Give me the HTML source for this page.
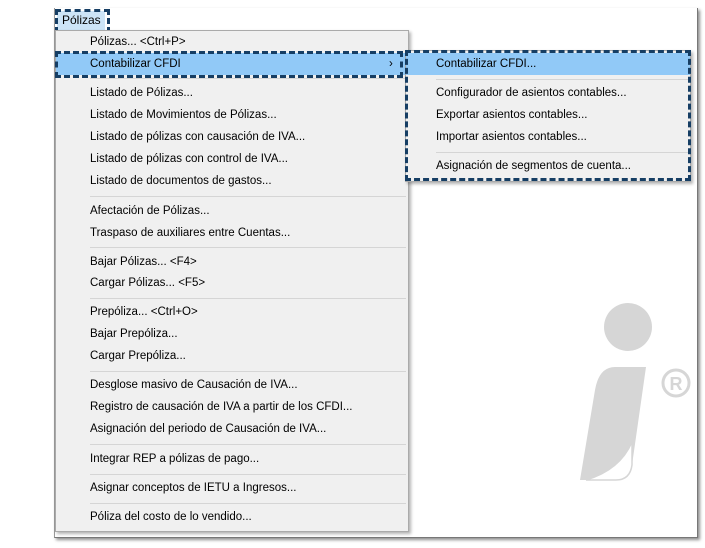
<!DOCTYPE html><html><head><style>
body{margin:0;width:705px;height:548px;background:#fff;position:relative;overflow:hidden;font-family:"Liberation Sans",sans-serif;font-size:11.5px;color:#000}
.win{position:absolute;left:54px;top:8px;width:642px;height:529px;background:#fff;border-left:1px solid #999;border-right:1px solid #777;border-bottom:1px solid #777;box-shadow:2px 2px 3px rgba(0,0,0,.45)}
.menu{position:absolute;background:#f0f0f0;border:1px solid #aaa;box-shadow:2px 2px 3px rgba(0,0,0,.3)}
.it{position:absolute;left:0;right:0;height:22px;line-height:22px}
.sep{position:absolute;height:1px;background:#d5d5d5}
.hl{background:#91c9f7}
.dash{position:absolute;border:3px dashed #163e64;box-sizing:border-box}
</style></head><body>
<div class="win"></div>
<div style="position:absolute;left:57px;top:11px;width:48px;height:20px;background:#cce4f7"></div>
<div style="position:absolute;left:62px;top:13px;font-size:12px">Pólizas</div>
<div class="dash" style="left:55px;top:9px;width:55px;height:24px"></div>

<div class="menu" style="left:55px;top:30px;width:352px;height:500px">
</div>
<div id="m" style="position:absolute;left:56px;top:0;width:352px">
<div class="it" style="top:31px;padding-left:34px">Pólizas... &lt;Ctrl+P&gt;</div>
<div class="it hl" style="top:53px;padding-left:34px;width:318px">Contabilizar CFDI<span style="position:absolute;left:333px">›</span></div>
<div class="sep" style="top:78px;left:34px;width:316px"></div>
<div class="it" style="top:82px;padding-left:34px">Listado de Pólizas...</div>
<div class="it" style="top:104px;padding-left:34px">Listado de Movimientos de Pólizas...</div>
<div class="it" style="top:126px;padding-left:34px">Listado de pólizas con causación de IVA...</div>
<div class="it" style="top:148px;padding-left:34px">Listado de pólizas con control de IVA...</div>
<div class="it" style="top:170px;padding-left:34px">Listado de documentos de gastos...</div>
<div class="sep" style="top:196px;left:34px;width:316px"></div>
<div class="it" style="top:200px;padding-left:34px">Afectación de Pólizas...</div>
<div class="it" style="top:222px;padding-left:34px">Traspaso de auxiliares entre Cuentas...</div>
<div class="sep" style="top:247px;left:34px;width:316px"></div>
<div class="it" style="top:251px;padding-left:34px">Bajar Pólizas... &lt;F4&gt;</div>
<div class="it" style="top:272px;padding-left:34px">Cargar Pólizas... &lt;F5&gt;</div>
<div class="sep" style="top:298px;left:34px;width:316px"></div>
<div class="it" style="top:301px;padding-left:34px">Prepóliza... &lt;Ctrl+O&gt;</div>
<div class="it" style="top:323px;padding-left:34px">Bajar Prepóliza...</div>
<div class="it" style="top:345px;padding-left:34px">Cargar Prepóliza...</div>
<div class="sep" style="top:371px;left:34px;width:316px"></div>
<div class="it" style="top:374px;padding-left:34px">Desglose masivo de Causación de IVA...</div>
<div class="it" style="top:396px;padding-left:34px">Registro de causación de IVA a partir de los CFDI...</div>
<div class="it" style="top:418px;padding-left:34px">Asignación del periodo de Causación de IVA...</div>
<div class="sep" style="top:444px;left:34px;width:316px"></div>
<div class="it" style="top:448px;padding-left:34px">Integrar REP a pólizas de pago...</div>
<div class="sep" style="top:474px;left:34px;width:316px"></div>
<div class="it" style="top:477px;padding-left:34px">Asignar conceptos de IETU a Ingresos...</div>
<div class="sep" style="top:503px;left:34px;width:316px"></div>
<div class="it" style="top:506px;padding-left:34px">Póliza del costo de lo vendido...</div>
</div>
<div class="dash" style="left:55px;top:51px;width:348px;height:27px"></div>

<div class="menu" style="left:405px;top:50px;width:284px;height:130px"></div>
<div style="position:absolute;left:406px;top:0;width:284px">
<div class="it hl" style="top:53px;padding-left:30px;width:254px">Contabilizar CFDI...</div>
<div class="sep" style="top:79px;left:30px;width:252px"></div>
<div class="it" style="top:82px;padding-left:30px">Configurador de asientos contables...</div>
<div class="it" style="top:104px;padding-left:30px">Exportar asientos contables...</div>
<div class="it" style="top:126px;padding-left:30px">Importar asientos contables...</div>
<div class="sep" style="top:152px;left:30px;width:252px"></div>
<div class="it" style="top:155px;padding-left:30px">Asignación de segmentos de cuenta...</div>
</div>
<div class="dash" style="left:405px;top:50px;width:286px;height:131px"></div>

<svg style="position:absolute;left:560px;top:290px" width="145" height="258">
<circle cx="68" cy="37" r="24" fill="#d6d6d6"/>
<path d="M55 77 L86 77 L72 175 Q70 190 56 190 L20 190 L35 100 Q39 77 55 77Z" fill="#d6d6d6"/>
<path d="M72 152 Q60 180 26 190 L56 190 Q70 190 72 175Z" fill="#fff" stroke="#d6d6d6" stroke-width="1.5"/>
<circle cx="116" cy="93" r="13" fill="none" stroke="#d6d6d6" stroke-width="3"/>
<text x="116" y="100" font-family="Liberation Sans" font-weight="bold" font-size="18" fill="#d6d6d6" text-anchor="middle">R</text>
</svg>
</body></html>
